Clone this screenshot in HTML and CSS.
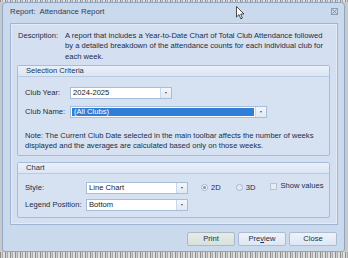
FILE: index.html
```html
<!DOCTYPE html>
<html lang="en">
<head>
  <meta charset="UTF-8">
  <title>Report: Attendance Report</title>
  <link rel="stylesheet" href="styles.css">
</head>
<body>

<div class="screen">
  <div class="strip strip-top"></div>

  <div class="window">
    <div class="titlebar">
      <span class="title">Report:&nbsp; Attendance Report</span>
      <svg class="close-x" width="7" height="7" viewBox="0 0 7 7">
        <rect x="0.5" y="0.5" width="6" height="6" fill="none" stroke="#8d9cb1" stroke-width="1"/>
        <path d="M1.5 1.5 L5.5 5.5 M5.5 1.5 L1.5 5.5" stroke="#7f8fa6" stroke-width="1"/>
      </svg>
    </div>

    <div class="client">
      <div class="desc">
        <span class="desc-label">Description:</span>
        <p class="desc-text">A report that includes a Year-to-Date Chart of Total Club Attendance followed by a detailed breakdown of the attendance counts for each individual club for each week.</p>
      </div>

      <div class="group">
        <div class="group-head">Selection Criteria</div>
        <div class="group-body">
          <div class="row">
            <label class="lbl lbl-short">Club Year:</label>
            <div class="combo combo-year">
              <span class="combo-text">2024-2025</span>
              <span class="combo-btn"><i class="arrow"></i></span>
            </div>
          </div>
          <div class="row">
            <label class="lbl lbl-short">Club Name:</label>
            <div class="combo combo-club">
              <span class="combo-text selected">(All Clubs)</span>
              <span class="combo-btn"><i class="arrow"></i></span>
            </div>
          </div>
          <p class="note">Note: The Current Club Date selected in the main toolbar affects the number of weeks displayed and the averages are calculated based only on those weeks.</p>
        </div>
      </div>

      <div class="group group-chart">
        <div class="group-head">Chart</div>
        <div class="group-body">
          <div class="row">
            <label class="lbl lbl-long">Style:</label>
            <div class="combo combo-chart">
              <span class="combo-text">Line Chart</span>
              <span class="combo-btn"><i class="arrow"></i></span>
            </div>
            <span class="radio checked"></span><span class="opt">2D</span>
            <span class="radio"></span><span class="opt">3D</span>
            <span class="check"></span><span class="opt opt-up">Show values</span>
          </div>
          <div class="row">
            <label class="lbl lbl-long">Legend Position:</label>
            <div class="combo combo-chart">
              <span class="combo-text">Bottom</span>
              <span class="combo-btn"><i class="arrow"></i></span>
            </div>
          </div>
        </div>
      </div>
    </div>

    <div class="buttons">
      <button class="btn btn-default">Print</button>
      <button class="btn">Pre<u>v</u>iew</button>
      <button class="btn">Close</button>
    </div>
  </div>

  <div class="strip strip-bottom"></div>

  <svg class="cursor" width="9" height="14" viewBox="0 0 9 14">
    <path d="M0.5 0.5 L0.5 11 L3 8.6 L4.8 12.8 L6.4 12.1 L4.7 8 L8 8 Z" fill="#fff" stroke="#222" stroke-width="0.8"/>
  </svg>
</div>

</body>
</html>
```

FILE: styles.css
```css
body {
  margin: 0;
  font-family: "Liberation Sans", Arial, sans-serif;
  font-size: 7.6px;
  color: #1b2d45;
}
.screen {
  position: relative;
  width: 348px;
  height: 258px;
  overflow: hidden;
  background: #c9c9c9;
}
.strip { background: repeating-linear-gradient(90deg, #8e8e8e 0 1px, #d2d2d2 1px 2px, #a9a9a9 2px 3px, #e0e0e0 3px 5px); }
.strip-top { height: 2px; }
.strip-bottom { height: 6px; }

.window {
  box-sizing: border-box;
  height: 250px;
  margin: 0 3px 0 2px;
  border: 1px solid #8ea7c7;
  border-radius: 4px 4px 3px 3px;
  background: #cbd9ec;
  display: flex;
  flex-direction: column;
}
.titlebar {
  height: 16px;
  display: flex;
  align-items: center;
  justify-content: space-between;
  padding: 0 6px 0 7px;
}
.title { color: #2a3f5c; font-size: 7.8px; }
.close-x { margin-top: 1px; }

.client {
  margin: 4px 6px 0 7px;
  border: 1px solid #9fb5d3;
  box-shadow: inset 0 0 0 1px #e4ebf6;
  background: #d4e0f1;
  padding: 7px 7px 6px 6px;
}
.desc {
  display: flex;
  padding-left: 1px;
  line-height: 10.3px;
}
.desc-label { width: 47px; flex: none; }
.desc-text { margin: 0; width: 266px; }

.group {
  margin-top: 3px;
  border: 1px solid #a6bcda;
  border-radius: 2px;
  background: #d6e2f2;
}
.group-chart { margin-top: 6px; }
.group-head {
  box-sizing: border-box;
  height: 11px;
  line-height: 10px;
  padding-left: 8px;
  border-bottom: 1px solid #b9cbe3;
  background: linear-gradient(#e9f0f9, #dbe6f4);
  color: #23344c;
}
.group-body { padding: 10px 0 4px 7px; }
.group-chart .group-body { padding: 8px 0 6px 7px; }

.row {
  display: flex;
  align-items: center;
  height: 12px;
}
.row + .row { margin-top: 7px; }
.group-chart .row + .row { margin-top: 5px; }
.lbl { flex: none; }
.lbl-short { width: 45px; }
.lbl-long { width: 61px; }

.note { margin: 13px 0 0; line-height: 10px; }

.combo {
  box-sizing: border-box;
  height: 12px;
  display: flex;
  border: 1px solid #a7bdd9;
  background: #fff;
}
.combo-year { width: 102px; }
.combo-club { width: 197px; }
.combo-chart { width: 102px; }
.combo-text {
  flex: 1;
  line-height: 10px;
  padding-left: 2px;
  color: #1a1a1a;
}
.combo-text.selected {
  margin: 1px;
  line-height: 8px;
  padding-left: 2px;
  background: #2f7fd8;
  color: #fff;
}
.combo-btn {
  width: 10px;
  flex: none;
  display: flex;
  align-items: center;
  justify-content: center;
  border-left: 1px solid #c9d7ea;
  background: linear-gradient(#f3f6fb, #e2e9f3);
}
.arrow {
  width: 0;
  height: 0;
  border-left: 1.5px solid transparent;
  border-right: 1.5px solid transparent;
  border-top: 2px solid #44546a;
}

.radio {
  box-sizing: border-box;
  width: 7px;
  height: 7px;
  margin-left: 13px;
  border: 1px solid #a5b6cc;
  border-radius: 50%;
  background: #e4eaf2;
  display: flex;
  align-items: center;
  justify-content: center;
}
.radio.checked { background: #f4f7fb; }
.radio.checked::after {
  content: "";
  width: 3px;
  height: 3px;
  border-radius: 50%;
  background: #7e93ae;
}
.radio + .opt + .radio { margin-left: 15px; }
.opt { margin-left: 3px; }
.check {
  box-sizing: border-box;
  width: 7px;
  height: 7px;
  margin: -3px 0 0 15px;
  border: 1px solid #b4c3d6;
  background: #e6ecf4;
}
.opt-up { margin-top: -4px; }

.buttons {
  display: flex;
  justify-content: flex-end;
  gap: 3px;
  margin-top: 7px;
  padding-right: 7px;
}
.btn {
  box-sizing: border-box;
  width: 48px;
  height: 14px;
  padding: 0;
  border: 1px solid #a9bdd7;
  border-radius: 2px;
  background: linear-gradient(#eef3fa, #dde7f4);
  font-family: inherit;
  font-size: 7.6px;
  color: #1b2d45;
}
.btn-default {
  border-color: #aab9c9;
  background: linear-gradient(#e6ebe6, #d9e1dc);
}

.cursor {
  position: absolute;
  left: 236px;
  top: 6px;
}
```
